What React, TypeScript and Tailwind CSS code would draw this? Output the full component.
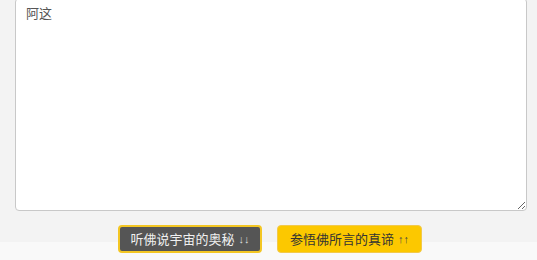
import React from "react";

export default function App() {
  return (
    <div
      className="w-[537px] h-[260px] overflow-hidden bg-[linear-gradient(to_bottom,#f3f3f3_0px,#f3f3f3_242px,#f9f9f9_242px)]"
      style={{ fontFamily: '"Liberation Sans", "Noto Sans CJK SC", sans-serif' }}
    >
      <div className="pl-[15px] pr-[10px] -mt-[2px]">
        <textarea
          defaultValue="阿这"
          className="block w-[512px] h-[213px] bg-white border border-[#c8c8c8] rounded-[4px] pt-[5px] px-[10px] text-[13px] leading-[20px] text-[#555] outline-none resize"
          style={{ fontFamily: '"Liberation Sans", "Noto Sans CJK SC", sans-serif' }}
        />
      </div>
      <div className="flex justify-center gap-[15px] pl-[3px] mt-[14px]">
        <button className="h-[28px] w-[144px] rounded-[4px] border-2 border-[#f3c623] bg-[#555555] text-[#f0f0f0] text-[13px] leading-none flex items-center justify-center">
          听佛说宇宙的奥秘 <span className="ml-[4px] text-[11px] text-[#ddd]">↓↓</span>
        </button>
        <button className="h-[28px] w-[145px] rounded-[4px] border border-[#f2c94a] bg-[#fcc800] text-[#333] text-[13px] leading-none flex items-center justify-center">
          参悟佛所言的真谛 <span className="ml-[4px] text-[11px] text-[#444]">↑↑</span>
        </button>
      </div>
    </div>
  );
}
